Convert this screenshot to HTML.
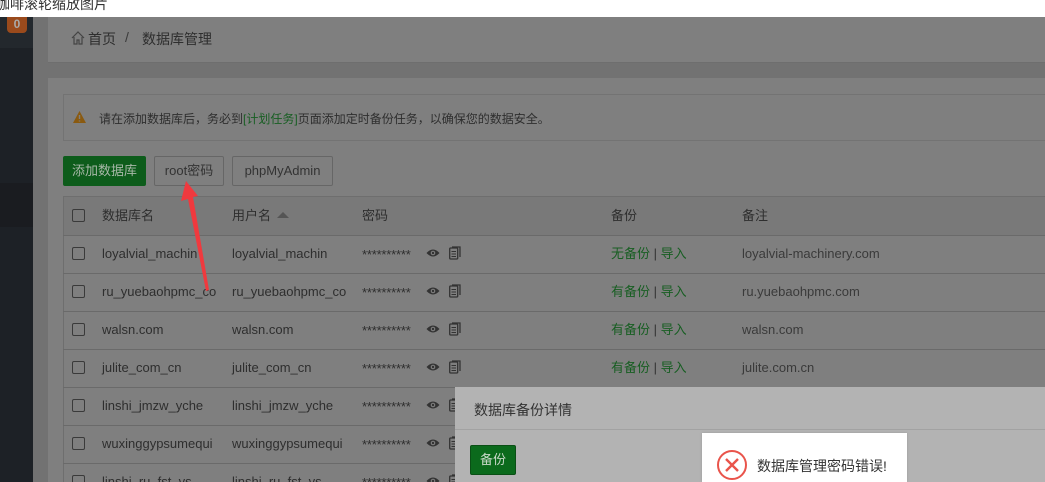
<!DOCTYPE html>
<html><head><meta charset="utf-8"><style>
*{margin:0;padding:0;box-sizing:border-box}
html{width:1045px;height:482px;overflow:hidden}
body{width:1045px;height:482px;overflow:hidden;position:relative;background:#727272;font-family:"Liberation Sans","Noto Sans CJK SC",sans-serif;font-size:13px;color:#333}
.a{position:absolute}
.t{position:absolute;white-space:nowrap;color:#2e2e2e}
.rt{position:absolute;white-space:nowrap;color:#2e2e2e;height:38px;line-height:38px}
.cb{position:absolute;left:72px;width:13px;height:13px;border:1px solid #3a3a3a;border-radius:2px;background:transparent}
.g{color:#175e22}
.row{position:absolute;left:63px;right:0;height:38px;border-top:1px solid #6a6a6a}
</style></head><body>
<div class="a" style="left:0;top:0;width:1045px;height:17px;background:#fff"></div>
<div class="t" style="left:-4px;top:-6px;font-size:14px;color:#333">咖啡滚轮缩放图片</div>
<div class="a" style="left:0;top:17px;width:33px;height:31px;background:#23282d"></div>
<div class="a" style="left:0;top:48px;width:33px;height:135px;background:#1d2126"></div>
<div class="a" style="left:0;top:183px;width:33px;height:44px;background:#1a1c20"></div>
<div class="a" style="left:0;top:227px;width:33px;height:255px;background:#1d2126"></div>
<div class="a" style="left:7px;top:17px;width:20px;height:16px;background:#9a4a1c;border-radius:0 0 4px 4px;color:#aaa;font-weight:bold;font-size:12px;text-align:center;line-height:14px">0</div>
<div class="a" style="left:48px;top:17px;width:997px;height:46px;background:#7f7f7f;border-bottom:1px solid #6e6e6e"></div>
<svg class="a" style="left:70px;top:30px" width="16" height="16" viewBox="0 0 16 16"><path d="M2 8 L8 2 L14 8 M4 7 V14 H7 V10 H9 V14 H12 V7" fill="none" stroke="#444" stroke-width="1.2"/></svg>
<div class="t" style="left:88px;top:29px;font-size:14px">首页</div>
<div class="t" style="left:125px;top:29px;font-size:14px;color:#3a3a3a">/</div>
<div class="t" style="left:142px;top:29px;font-size:14px">数据库管理</div>
<div class="a" style="left:48px;top:78px;width:997px;height:404px;background:#7f7f7f"></div>
<div class="a" style="left:63px;top:94px;width:982px;height:47px;border:1px solid #737373;border-right:none"></div>
<svg class="a" style="left:72px;top:110px" width="15" height="14" viewBox="0 0 15 14"><path d="M7.5 1 L14 13 H1 Z" fill="#8a5a10"/><path d="M7.5 5 V9 M7.5 10.5 V11.5" stroke="#7f7f7f" stroke-width="1.4"/></svg>
<div class="t" style="left:99px;top:110px;font-size:12px">请在添加数据库后，务必到<span class="g">[计划任务]</span>页面添加定时备份任务，以确保您的数据安全。</div>
<div class="a" style="left:63px;top:156px;width:83px;height:30px;background:#0d5c1b;border-radius:2px;color:#a8b8a8;text-align:center;line-height:30px">添加数据库</div>
<div class="a" style="left:154px;top:156px;width:70px;height:30px;border:1px solid #666;border-radius:2px;text-align:center;line-height:28px;color:#333">root密码</div>
<div class="a" style="left:232px;top:156px;width:101px;height:30px;border:1px solid #666;border-radius:2px;text-align:center;line-height:28px;color:#333">phpMyAdmin</div>
<div class="a" style="left:63px;top:196px;width:982px;height:39px;background:#797979;border-top:1px solid #6e6e6e;border-left:1px solid #6e6e6e"></div>
<div class="a" style="left:63px;top:196px;width:1px;height:286px;background:#6e6e6e"></div>
<div class="cb" style="top:209px"></div>
<div class="rt" style="left:102px;top:197px">数据库名</div>
<div class="rt" style="left:232px;top:197px">用户名</div>
<div class="a" style="left:277px;top:212px;width:0;height:0;border-left:6px solid transparent;border-right:6px solid transparent;border-bottom:6px solid #555"></div>
<div class="rt" style="left:362px;top:197px">密码</div>
<div class="rt" style="left:611px;top:197px">备份</div>
<div class="rt" style="left:742px;top:197px">备注</div>
<div class="row" style="top:235px"></div><div class="row" style="top:273px"></div><div class="row" style="top:311px"></div><div class="row" style="top:349px"></div><div class="row" style="top:387px"></div><div class="row" style="top:425px"></div><div class="row" style="top:463px"></div>
<div id="rows"></div>
<script>
var d=[["loyalvial_machin","无备份","loyalvial-machinery.com"],["ru_yuebaohpmc_co","有备份","ru.yuebaohpmc.com"],["walsn.com","有备份","walsn.com"],["julite_com_cn","有备份","julite.com.cn"],["linshi_jmzw_yche","",""],["wuxinggypsumequi","",""],["linshi_ru_fst_vs","",""]];
var h="";
d.forEach(function(r,i){var y=235+38*i;
h+='<div class="cb" style="top:'+(y+12)+'px"></div>';
h+='<div class="rt" style="left:102px;top:'+y+'px">'+r[0]+'</div><div class="rt" style="left:232px;top:'+y+'px">'+r[0]+'</div>';
h+='<div class="rt" style="left:362px;top:'+(y+1)+'px;font-size:13px;letter-spacing:-0.2px">**********</div>';
h+='<svg class="a" style="left:426px;top:'+(y+13)+'px" width="14" height="10" viewBox="0 0 14 10"><path d="M0.5 5 Q7 -2 13.5 5 Q7 12 0.5 5Z" fill="#333"/><circle cx="7" cy="5" r="2.3" fill="#7f7f7f"/><circle cx="7" cy="5" r="1.2" fill="#333"/></svg>';
h+='<svg class="a" style="left:449px;top:'+(y+11)+'px" width="12" height="14" viewBox="0 0 12 14"><rect x="0.7" y="2" width="8" height="11" rx="1" fill="none" stroke="#333" stroke-width="1.3"/><path d="M3 1H11V11" fill="none" stroke="#333" stroke-width="1.3"/><path d="M2.5 5.5H7M2.5 8H7M2.5 10.5H7" stroke="#333"/></svg>';
if(r[1])h+='<div class="rt g" style="left:611px;top:'+y+'px">'+r[1]+' <span style="color:#333">|</span> 导入</div><div class="rt" style="left:742px;top:'+y+'px;color:#3a3a3a">'+r[2]+'</div>';
});
document.getElementById("rows").innerHTML=h;
</script>
<svg class="a" style="left:0;top:0" width="300" height="300"><polygon points="186,181 198,196 193,197 209,290 206,291 188,199 181,201" fill="#f0393e"/></svg>
<div class="a" style="left:455px;top:387px;width:590px;height:95px;background:#b3b3b3"></div>
<div class="a" style="left:455px;top:429px;width:590px;height:1px;background:#a2a2a2"></div>
<div class="t" style="left:474px;top:400px;font-size:14px;color:#333">数据库备份详情</div>
<div class="a" style="left:470px;top:445px;width:46px;height:30px;background:#0b6a1c;border:1px solid #0a4f15;border-radius:2px;color:#c8d8c8;text-align:center;line-height:28px">备份</div>
<div class="a" style="left:702px;top:433px;width:205px;height:49px;background:#fff;box-shadow:0 0 2px #999"></div>
<svg class="a" style="left:716px;top:449px" width="32" height="32" viewBox="0 0 32 32"><circle cx="16" cy="16" r="14" fill="none" stroke="#e9544b" stroke-width="2"/><path d="M10 10L22 22M22 10L10 22" stroke="#e9544b" stroke-width="2.4"/></svg>
<div class="t" style="left:757px;top:456px;font-size:14px;color:#333">数据库管理密码错误!</div>
</body></html>
